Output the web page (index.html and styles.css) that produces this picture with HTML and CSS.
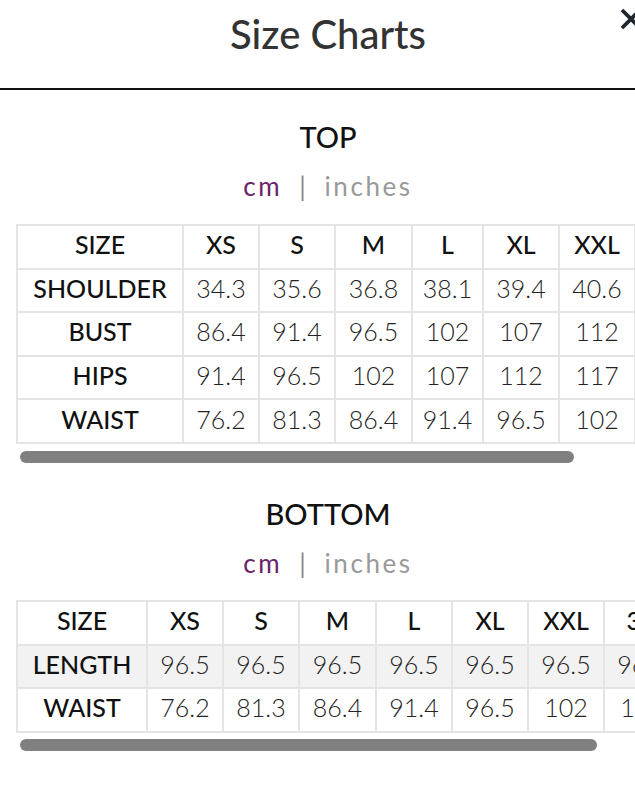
FILE: index.html
```html
<!DOCTYPE html>
<html lang="en">
<head>
<meta charset="utf-8">
<title>Size Charts</title>
<link rel="stylesheet" href="styles.css">
</head>
<body>
<div class="modal">
  <header class="modal-header">
    <h1 class="modal-title">Size Charts</h1>
    <button class="close-btn" aria-label="Close">
      <svg width="26" height="26" viewBox="0 0 26 26"><path d="M4 4 L22 22 M22 4 L4 22" stroke="#1f2630" stroke-width="3.8" stroke-linecap="butt"/></svg>
    </button>
  </header>

  <section class="chart chart-top">
    <h2 class="chart-title">TOP</h2>
    <div class="units"><span class="unit active">cm</span><span class="sep">|</span><span class="unit">inches</span></div>
    <div class="table-scroll">
      <table class="size-table t-top">
        <colgroup>
          <col class="c-label-top"><col class="c76"><col class="c76"><col class="c77"><col class="c71"><col class="c76"><col class="c76">
        </colgroup>
        <tr class="head"><th>SIZE</th><th>XS</th><th>S</th><th>M</th><th>L</th><th>XL</th><th>XXL</th></tr>
        <tr><th>SHOULDER</th><td>34.3</td><td>35.6</td><td>36.8</td><td>38.1</td><td>39.4</td><td>40.6</td></tr>
        <tr><th>BUST</th><td>86.4</td><td>91.4</td><td>96.5</td><td>102</td><td>107</td><td>112</td></tr>
        <tr><th>HIPS</th><td>91.4</td><td>96.5</td><td>102</td><td>107</td><td>112</td><td>117</td></tr>
        <tr><th>WAIST</th><td>76.2</td><td>81.3</td><td>86.4</td><td>91.4</td><td>96.5</td><td>102</td></tr>
      </table>
    </div>
    <div class="scrollbar"><div class="thumb thumb-top"></div></div>
  </section>

  <section class="chart chart-bottom">
    <h2 class="chart-title">BOTTOM</h2>
    <div class="units"><span class="unit active">cm</span><span class="sep">|</span><span class="unit">inches</span></div>
    <div class="table-scroll">
      <table class="size-table t-bottom">
        <colgroup>
          <col class="c-label-bottom"><col class="c76"><col class="c76"><col class="c77"><col class="c76"><col class="c76"><col class="c76"><col class="c76">
        </colgroup>
        <tr class="head"><th>SIZE</th><th>XS</th><th>S</th><th>M</th><th>L</th><th>XL</th><th>XXL</th><th>3X</th></tr>
        <tr class="shaded"><th>LENGTH</th><td>96.5</td><td>96.5</td><td>96.5</td><td>96.5</td><td>96.5</td><td>96.5</td><td>96.5</td></tr>
        <tr><th>WAIST</th><td>76.2</td><td>81.3</td><td>86.4</td><td>91.4</td><td>96.5</td><td>102</td><td>107</td></tr>
      </table>
    </div>
    <div class="scrollbar"><div class="thumb thumb-bottom"></div></div>
  </section>
</div>
</body>
</html>
```

FILE: styles.css
```css
html, body {
  margin: 0;
  padding: 0;
  background: #ffffff;
}
body {
  font-family: "Lato", "Noto Sans", sans-serif;
  color: #111;
  width: 635px;
  overflow: hidden;
}
.modal {
  width: 635px;
  overflow: hidden;
}
.modal-header {
  position: relative;
  height: 88px;
  border-bottom: 2px solid #111;
  padding-left: 21px;
  display: flex;
  justify-content: center;
}
.modal-title {
  margin: 10px 0 0 0;
  font-size: 40px;
  font-weight: 500;
  color: #333;
  line-height: 48px;
}
.close-btn {
  position: absolute;
  top: 6px;
  right: -9px;
  border: 0;
  background: none;
  padding: 0;
  width: 26px;
  height: 26px;
}
.chart {
  padding-left: 16px;
}
.chart-title {
  margin: 0;
  padding-left: 5px;
  text-align: center;
  font-size: 29px;
  font-weight: 500;
  color: #111;
  line-height: 36px;
}
.chart-top .chart-title { margin-top: 29px; }
.chart-bottom .chart-title { margin-top: 33px; }
.units {
  padding-left: 5px;
  margin-top: 16px;
  text-align: center;
  font-size: 26px;
  line-height: 30px;
  letter-spacing: 2.6px;
  color: #999;
}
.unit.active { color: #6a2368; }
.sep { margin: 0 16px 0 17px; color: #888; }
.table-scroll {
  margin-top: 23px;
  overflow: hidden;
}
.size-table {
  border-collapse: collapse;
  table-layout: fixed;
}
.t-top { width: 618px; }
.t-bottom { width: 663px; }
.size-table th,
.size-table td {
  border: 2px solid #e4e4e4;
  height: 36.6px;
  padding: 0 0 5px 0;
  text-align: center;
  font-size: 25px;
  white-space: nowrap;
}
.size-table th {
  font-weight: 500;
  color: #111;
}
.size-table td {
  font-weight: 300;
  color: #222;
}
.size-table tr.shaded { background: #f2f2f2; }
.c-label-top { width: 166px; }
.c-label-bottom { width: 130px; }
.c76 { width: 76px; }
.c77 { width: 77px; }
.c71 { width: 71px; }
.scrollbar {
  margin: 7px 0 0 4px;
  height: 12px;
}
.thumb {
  height: 12px;
  border-radius: 6px;
  background: #808080;
}
.thumb-top { width: 554px; }
.thumb-bottom { width: 577px; }
.chart-bottom .table-scroll { margin-top: 22px; }
.chart-bottom .scrollbar { margin-top: 6px; }
```
